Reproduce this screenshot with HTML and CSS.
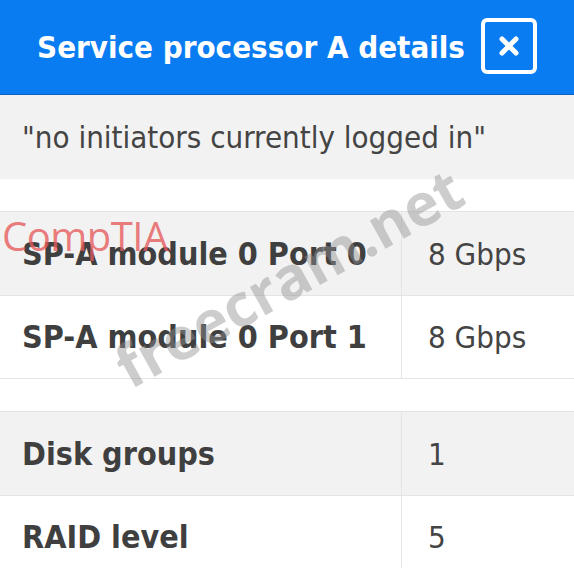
FILE: index.html
```html
<!DOCTYPE html>
<html>
<head>
<meta charset="utf-8">
<link rel="stylesheet" href="styles.css">
</head>
<body>
<div class="panel">
  <header class="head">
    <h1 class="title">Service processor A details</h1>
    <button class="close" aria-label="Close">
      <svg width="22" height="22" viewBox="0 0 22 22"><path d="M4 4 L18 18 M18 4 L4 18" stroke="#fff" stroke-width="5" stroke-linecap="round"/></svg>
    </button>
  </header>
  <div class="note">"no initiators currently logged in"</div>
  <div class="spacer"></div>
  <div class="table">
    <div class="row alt"><div class="k">SP-A module 0 Port 0</div><div class="v">8 Gbps</div></div>
    <div class="row"><div class="k">SP-A module 0 Port 1</div><div class="v">8 Gbps</div></div>
  </div>
  <div class="spacer"></div>
  <div class="table">
    <div class="row alt"><div class="k">Disk groups</div><div class="v">1</div></div>
    <div class="row"><div class="k">RAID level</div><div class="v">5</div></div>
  </div>
  <div class="wm-comptia">CompTIA<span class="reg">.</span></div>
  <div class="wm-free">freecram.net</div>
</div>
</body>
</html>
```
FILE: styles.css
```css
html, body { margin: 0; padding: 0; background: #fff; }
body { width: 574px; height: 568px; overflow: hidden; font-family: "DejaVu Sans Condensed", "DejaVu Sans", sans-serif; color: #444; }
.panel { position: relative; }
.head { height: 94px; background: #0a7cf2; border-bottom: 1px solid #0a62c4; display: flex; align-items: center; justify-content: center; gap: 16px; padding-left: 0; }
.title { margin: 0; color: #fff; font-size: 31px; font-weight: bold; letter-spacing: 0; }
.close { width: 56px; height: 56px; border: 4px solid #fff; border-radius: 6px; background: transparent; display: flex; align-items: center; justify-content: center; padding: 0; margin-top: -2px; }
.note { height: 84px; background: #f2f2f2; display: flex; align-items: center; padding-left: 22px; font-size: 31px; color: #444; }
.spacer { height: 32px; }
.table { border-top: 1px solid #e4e4e4; border-bottom: 1px solid #e4e4e4; }
.row { display: grid; grid-template-columns: 402px 1fr; height: 82px; }
.row + .row { border-top: 1px solid #e4e4e4; }
.row.alt { background: #f2f2f2; height: 83px; }
.k { font-weight: bold; font-size: 32px; padding-left: 22px; display: flex; align-items: center; border-right: 1px solid #e4e4e4; color: #3f3f3f; }
.v { font-size: 31px; padding-left: 26px; display: flex; align-items: center; }
.wm-comptia { position: absolute; left: 2px; top: 208px; font-family: "Open Sans", sans-serif; font-size: 40px; color: rgba(230, 90, 90, 0.8); letter-spacing: -0.5px; }
.wm-comptia .reg { font-size: 14px; }
.wm-free { position: absolute; left: 100px; top: 335px; font-family: "Open Sans", sans-serif; font-weight: bold; font-size: 59px; color: rgba(145, 145, 145, 0.45); transform: rotate(-29deg); transform-origin: left top; white-space: nowrap; }
```
